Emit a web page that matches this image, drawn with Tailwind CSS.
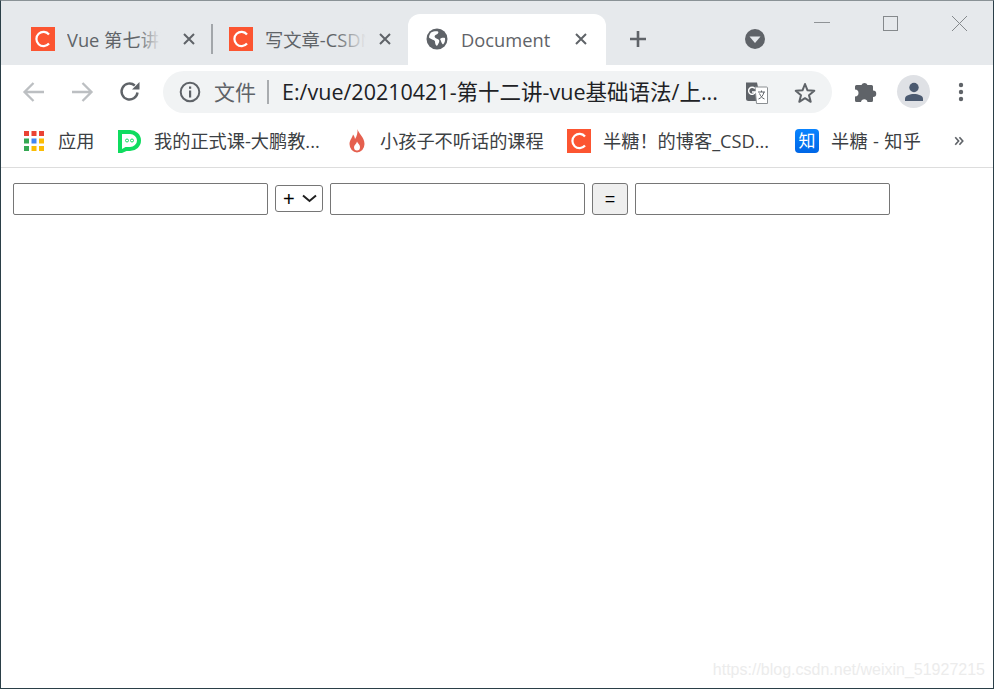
<!DOCTYPE html>
<html lang="zh">
<head>
<meta charset="utf-8">
<script src="https://cdn.jsdelivr.net/npm/@tailwindcss/browser@4"></script>
<title>Document</title>
</head>
<body class="bg-white overflow-hidden">
<div class="relative w-[994px] h-[689px] flex flex-col border-l border-r border-b border-t border-l-[#2b3f48] border-r-[#2b3f48] border-b-[#2b3f48] border-t-[#8a9296] bg-white overflow-hidden font-['Open_Sans','Noto_Sans_CJK_SC',sans-serif]">

  <!-- tab strip -->
  <div class="h-[64px] shrink-0 bg-[#e6e9ec] flex items-end text-[18.3px] text-[#5f6368] relative">
    <div class="w-[19px] shrink-0"></div>
    <!-- tab 1 -->
    <div class="w-[191px] h-[51px] shrink-0 flex items-center pl-[11px] pb-[1px]">
      <svg class="w-[24px] h-[24px] shrink-0" viewBox="0 0 24 24"><rect width="24" height="24" fill="#fc5531"/><path d="M18 7.500A7.100 7.100 0 1 0 18 16.500" fill="none" stroke="#fff" stroke-width="2.200"/></svg>
      <div class="relative w-[94px] ml-[12px] mt-[1px] overflow-hidden whitespace-nowrap leading-[24px] text-[#606468]">Vue 第七讲<div class="absolute right-0 top-0 h-full w-[24px] bg-gradient-to-r from-transparent to-[#e6e9ec]"></div></div>
      <svg class="w-[14px] h-[14px] ml-[21px] shrink-0" viewBox="0 0 14 14"><path d="M2 2L12 12M12 2L2 12" stroke="#5f6368" stroke-width="2" fill="none"/></svg>
    </div>
    <!-- separator + tab 2 -->
    <div class="w-[197px] h-[51px] shrink-0 flex items-center pb-[1px]">
      <div class="w-[2px] h-[30px] bg-[#a2a6aa] shrink-0"></div>
      <svg class="w-[24px] h-[24px] ml-[16px] shrink-0" viewBox="0 0 24 24"><rect width="24" height="24" fill="#fc5531"/><path d="M18 7.500A7.100 7.100 0 1 0 18 16.500" fill="none" stroke="#fff" stroke-width="2.200"/></svg>
      <div class="relative w-[101px] ml-[12px] mt-[1px] overflow-hidden whitespace-nowrap leading-[24px] text-[#606468]">写文章-CSDN<div class="absolute right-0 top-0 h-full w-[30px] bg-gradient-to-r from-transparent to-[#e6e9ec]"></div></div>
      <svg class="w-[14px] h-[14px] ml-[12px] shrink-0" viewBox="0 0 14 14"><path d="M2 2L12 12M12 2L2 12" stroke="#5f6368" stroke-width="2" fill="none"/></svg>
    </div>
    <!-- active tab -->
    <div class="w-[198px] h-[51px] shrink-0 bg-white rounded-t-[12px] flex items-center pl-[17px] pb-[1px]">
      <svg class="w-[24px] h-[24px] shrink-0" viewBox="0 0 24 24"><circle cx="12" cy="12" r="10.500" fill="#5f6368"/><path d="M6 5.500c2-1 5-1.500 7-1 1 .8 0 2.500-1.500 3S9 9 10 10.500s3 1 4 2.500-1 4.500-2 6c-1.500-.5-2-3-2-4.500S6 12.500 4 10.500c0-2 1-4 2-5zM15 12c1-1 3-1.500 5-1 .5 2.500-.5 5-2 6.500-1.500-1-2-4-3-5.500z" fill="#fff"/></svg>
      <div class="w-[92px] ml-[12px] mt-[1px] whitespace-nowrap leading-[24px]">Document</div>
      <svg class="w-[14px] h-[14px] ml-[21px] shrink-0" viewBox="0 0 14 14"><path d="M2 2L12 12M12 2L2 12" stroke="#5f6368" stroke-width="2" fill="none"/></svg>
    </div>
    <!-- new tab -->
    <div class="w-[64px] h-[51px] shrink-0 flex items-center justify-center pb-[1px]">
      <svg class="w-[18px] h-[18px]" viewBox="0 0 18 18"><path d="M9 1V17M1 9H17" stroke="#5f6368" stroke-width="2.600"/></svg>
    </div>
    <div class="w-[51px] h-[51px] shrink-0 flex items-center justify-end pb-[1px] ml-[33px]">
      <svg class="w-[20px] h-[20px] mr-[-11px]" viewBox="0 0 20 20"><circle cx="10" cy="10" r="10" fill="#5f6368"/><path d="M4.500 7.500H15.500L10 14z" fill="#e6e9ec"/></svg>
    </div>
    <!-- window controls -->
    <div class="absolute top-0 right-0 flex">
      <div class="absolute left-[-179px] top-[21px] w-[16px] h-[1px] bg-[#8f9396]"></div>
      <div class="absolute left-[-110px] top-[15px] w-[15px] h-[15px] border border-[#85898c]"></div>
      <svg class="absolute left-[-42px] top-[14px] w-[17px] h-[17px]" viewBox="0 0 17 17"><path d="M1 1L16 16M16 1L1 16" stroke="#85898c" stroke-width="1" fill="none"/></svg>
    </div>
  </div>

  <!-- toolbar -->
  <div class="h-[53px] shrink-0 bg-white flex items-center">
    <div class="w-[21px] shrink-0"></div>
    <svg class="w-[24px] h-[24px] shrink-0" viewBox="0 0 24 24"><path d="M22 12H3M11.500 3L2.500 12L11.500 21" stroke="#bcbfc2" stroke-width="2.300" fill="none"/></svg>
    <svg class="w-[24px] h-[24px] ml-[24px] shrink-0" viewBox="0 0 24 24"><path d="M2 12H21M12.500 3L21.500 12L12.500 21" stroke="#bcbfc2" stroke-width="2.300" fill="none"/></svg>
    <svg class="w-[24px] h-[24px] ml-[24px] shrink-0" viewBox="0 0 24 24"><path d="M19.500 12.500A8 8 0 1 1 16.800 5.500" fill="none" stroke="#5f6368" stroke-width="2.400"/><path d="M14 9.500H21.500V2z" fill="#5f6368"/></svg>
    <!-- omnibox -->
    <div class="ml-[21px] w-[669px] h-[42px] bg-[#f1f3f4] rounded-full flex items-center relative shrink-0">
      <svg class="w-[22px] h-[22px] ml-[16px] shrink-0" viewBox="0 0 22 22"><circle cx="11" cy="11" r="9.300" fill="none" stroke="#5f6368" stroke-width="2"/><rect x="10" y="9.500" width="2.200" height="7" fill="#5f6368"/><rect x="10" y="5.500" width="2.200" height="2.300" fill="#5f6368"/></svg>
      <span class="ml-[13px] text-[21px] leading-[28px] text-[#5f6368] whitespace-nowrap w-[42px]">文件</span>
      <div class="ml-[11px] w-[2px] h-[24px] bg-[#a9acaf] shrink-0"></div>
      <span class="ml-[13px] w-[445px] text-[21.500px] leading-[28px] text-[#202124] whitespace-nowrap overflow-hidden">E:/vue/20210421-第十二讲-vue基础语法/上...</span>
      <svg class="absolute left-[582px] top-[10px] w-[24px] h-[24px]" viewBox="0 0 24 24"><path d="M1 1.500H12L16 20H3.500A2.500 2.500 0 0 1 1 17.500z" fill="#5f6368"/><path d="M10 6H21.500A1 1 0 0 1 22.500 7V22.500H11.500z" fill="#fff" stroke="#8b8f92"/><path d="M9.800 7.500A3.500 3.500 0 1 0 10.400 11H7" fill="none" stroke="#fff" stroke-width="1.400"/><path d="M13 11H20M16.500 9.500V11M19 11C18 15 16 17 13.500 18M14.500 12.500C15.500 15 17 17 19.500 18" fill="none" stroke="#5f6368" stroke-width="1"/></svg>
      <svg class="absolute left-[630px] top-[10px] w-[24px] h-[24px]" viewBox="0 0 24 24"><path d="M12 3L14.500 9.300L21.300 9.800L16 14.200L17.700 20.800L12 17.200L6.300 20.800L8 14.200L2.700 9.800L9.500 9.300z" fill="none" stroke="#5f6368" stroke-width="2" stroke-linejoin="round"/></svg>
    </div>
    <svg class="ml-[21px] w-[24px] h-[24px] shrink-0" viewBox="0 0 24 24"><path d="M2 9.500V6.500A1.500 1.500 0 0 1 3.500 5H8.500A3.200 3.200 0 0 1 14.500 5H18.500A1.500 1.500 0 0 1 20 6.500V10.500A3.200 3.200 0 0 1 20 17V20.500A1.500 1.500 0 0 1 18.500 22H14.500A3.300 3.300 0 0 0 8 22H3.500A1.500 1.500 0 0 1 2 20.500V16.500A3.300 3.300 0 0 0 2 9.500z" fill="#5f6368"/></svg>
    <div class="ml-[20px] w-[33px] h-[33px] rounded-full bg-[#dfe1e5] flex items-center justify-center shrink-0">
      <svg class="w-[22px] h-[22px]" viewBox="0 0 22 22"><circle cx="11" cy="6.500" r="4.700" fill="#4b5a70"/><path d="M2 20V17.500C2 14.500 7 13 11 13S20 14.500 20 17.500V20z" fill="#4b5a70"/></svg>
    </div>
    <svg class="ml-[28px] w-[6px] h-[20px] shrink-0" viewBox="0 0 6 20"><circle cx="3" cy="3" r="2.200" fill="#5f6368"/><circle cx="3" cy="10" r="2.200" fill="#5f6368"/><circle cx="3" cy="17" r="2.200" fill="#5f6368"/></svg>
  </div>

  <!-- bookmarks -->
  <div class="h-[50px] shrink-0 bg-white border-b border-[#dddddd] flex items-center pb-[3px] text-[18.200px] leading-[24px] text-[#3c4043] whitespace-nowrap">
    <svg class="ml-[23px] w-[20px] h-[20px] shrink-0" viewBox="0 0 20 20">
      <rect x="0" y="0" width="5" height="5" fill="#ea4335"/><rect x="7.500" y="0" width="5" height="5" fill="#ea4335"/><rect x="15" y="0" width="5" height="5" fill="#ea4335"/>
      <rect x="0" y="7.500" width="5" height="5" fill="#34a853"/><rect x="7.500" y="7.500" width="5" height="5" fill="#4285f4"/><rect x="15" y="7.500" width="5" height="5" fill="#fbbc05"/>
      <rect x="0" y="15" width="5" height="5" fill="#34a853"/><rect x="7.500" y="15" width="5" height="5" fill="#fbbc05"/><rect x="15" y="15" width="5" height="5" fill="#fbbc05"/>
    </svg>
    <span class="ml-[14px] w-[36px]">应用</span>
    <svg class="ml-[24px] w-[23px] h-[23px] shrink-0" viewBox="0 0 23 23"><path d="M0 0H12A11 10.500 0 0 1 12 21H8.500L4 23H0z" fill="#0fdc5f"/><path d="M4 4H12A7 6.500 0 0 1 12 17H7.500L4 19z" fill="#fff"/><circle cx="9" cy="10.500" r="1.500" fill="none" stroke="#0fdc5f"/><circle cx="14" cy="10.500" r="1.500" fill="none" stroke="#0fdc5f"/></svg>
    <span class="ml-[13px] w-[166px]">我的正式课-大鹏教...</span>
    <svg class="ml-[28px] w-[18px] h-[24px] shrink-0" viewBox="0 0 18 24"><path d="M9.500 0C10 4 16.500 8 16.500 15A7.500 8.500 0 0 1 1.500 15C1.500 11 4 9.500 5 5.500C6.500 7 6.800 9 7 10C8.800 7.500 9.800 4 9.500 0z" fill="#e5604f"/><path d="M9 12.500C9.500 14.500 12 15.500 12 18A3 3.500 0 0 1 6 18C6 16 8.500 15 9 12.500z" fill="#fff"/></svg>
    <span class="ml-[14px] w-[163px]">小孩子不听话的课程</span>
    <svg class="ml-[24px] w-[24px] h-[24px] shrink-0" viewBox="0 0 24 24"><rect width="24" height="24" fill="#fc5531"/><path d="M18 7.500A7.100 7.100 0 1 0 18 16.500" fill="none" stroke="#fff" stroke-width="2.200"/></svg>
    <span class="ml-[12px] w-[167px]">半糖！的博客_CSD...</span>
    <div class="ml-[25px] w-[24px] h-[24px] rounded-[4px] bg-gradient-to-b from-[#0a84ff] to-[#0066e6] text-white text-[17px] leading-[24px] text-center shrink-0">知</div>
    <span class="ml-[12px] w-[91px] tracking-[0.3px]">半糖 - 知乎</span>
    <svg class="ml-[32px] w-[10px] h-[10px] shrink-0" viewBox="0 0 12 12"><path d="M1.500 1.500L5.500 6L1.500 10.500M6.500 1.500L10.500 6L6.500 10.500" fill="none" stroke="#5f6368" stroke-width="2"/></svg>
  </div>

  <!-- page body -->
  <div class="flex-1 bg-white flex items-start pl-[12px] pt-[15px] gap-[7px]">
    <input type="text" class="w-[255px] h-[32px] border border-[#767676] rounded-[2px] bg-white shrink-0">
    <div class="relative w-[48px] h-[27px] mt-[2px] shrink-0">
      <select class="appearance-none w-full h-full border border-[#767676] rounded-[3px] bg-white text-[20px] leading-[24px] text-black pl-[7px] font-['Liberation_Sans',sans-serif]"><option>+</option></select>
      <svg class="absolute left-[27px] top-[9px] w-[15px] h-[9px] pointer-events-none" viewBox="0 0 15 9"><path d="M1 1.500L7.500 7L14 1.500" fill="none" stroke="#202020" stroke-width="2"/></svg>
    </div>
    <input type="text" class="w-[255px] h-[32px] border border-[#767676] rounded-[2px] bg-white shrink-0">
    <button class="w-[36px] h-[32px] border border-[#767676] rounded-[3px] bg-[#efefef] text-[18px] leading-[28px] text-black shrink-0 font-['Liberation_Sans',sans-serif]">=</button>
    <input type="text" class="w-[255px] h-[32px] border border-[#767676] rounded-[2px] bg-white shrink-0">
  </div>

  <div class="absolute right-[8px] bottom-[8px] text-[16px] leading-[20px] text-[#ececec] font-['Liberation_Sans',sans-serif] whitespace-nowrap">https://blog.csdn.net/weixin_51927215</div>
</div>
</body>
</html>
